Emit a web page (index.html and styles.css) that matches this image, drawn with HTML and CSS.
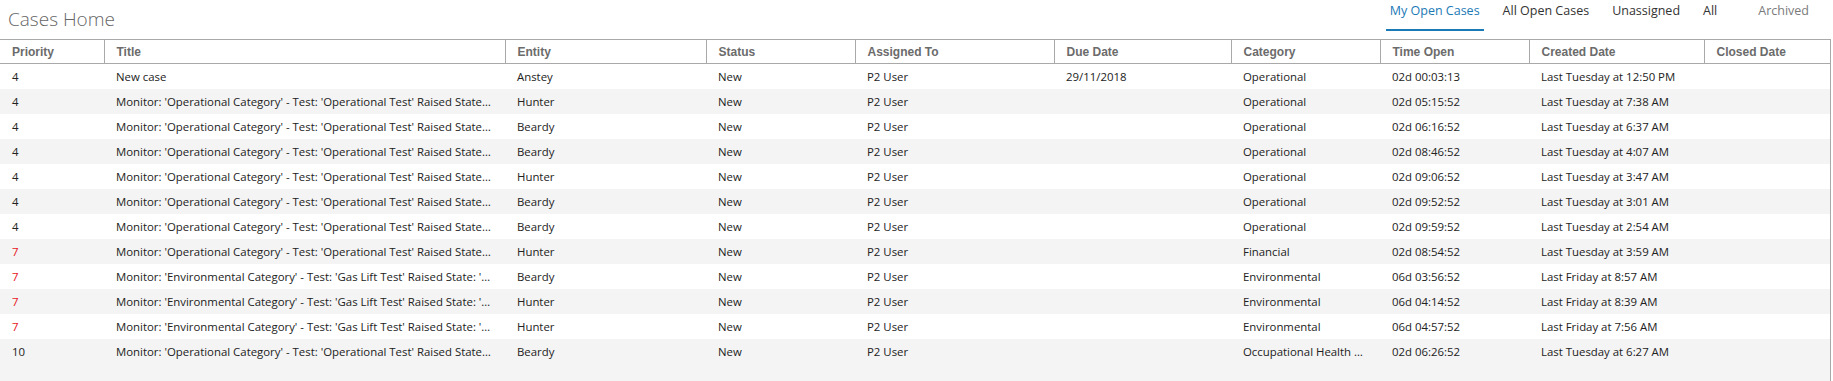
FILE: index.html
```html
<!DOCTYPE html>
<html lang="en">
<head>
<meta charset="utf-8">
<title>Cases Home</title>
<link rel="stylesheet" href="styles.css">
</head>
<body>
<div class="page">
  <header class="topbar">
    <h1 class="page-title">Cases Home</h1>
    <nav class="tabs">
      <a class="tab active">My Open Cases</a>
      <a class="tab">All Open Cases</a>
      <a class="tab">Unassigned</a>
      <a class="tab">All</a>
      <a class="tab archived">Archived</a>
    </nav>
  </header>
  <div class="grid">
    <table class="cases">
      <colgroup>
        <col class="c-priority"><col class="c-title"><col class="c-entity"><col class="c-status"><col class="c-assigned"><col class="c-due"><col class="c-category"><col class="c-time"><col class="c-created"><col class="c-closed">
      </colgroup>
      <thead>
        <tr><th>Priority</th><th>Title</th><th>Entity</th><th>Status</th><th>Assigned To</th><th>Due Date</th><th>Category</th><th>Time Open</th><th>Created Date</th><th>Closed Date</th></tr>
      </thead>
      <tbody>
        <tr><td>4</td><td>New case</td><td>Anstey</td><td>New</td><td>P2 User</td><td>29/11/2018</td><td>Operational</td><td>02d 00:03:13</td><td>Last Tuesday at 12:50 PM</td><td></td></tr>
        <tr><td>4</td><td>Monitor: 'Operational Category' - Test: 'Operational Test' Raised State: 'High'</td><td>Hunter</td><td>New</td><td>P2 User</td><td></td><td>Operational</td><td>02d 05:15:52</td><td>Last Tuesday at 7:38 AM</td><td></td></tr>
        <tr><td>4</td><td>Monitor: 'Operational Category' - Test: 'Operational Test' Raised State: 'High'</td><td>Beardy</td><td>New</td><td>P2 User</td><td></td><td>Operational</td><td>02d 06:16:52</td><td>Last Tuesday at 6:37 AM</td><td></td></tr>
        <tr><td>4</td><td>Monitor: 'Operational Category' - Test: 'Operational Test' Raised State: 'High'</td><td>Beardy</td><td>New</td><td>P2 User</td><td></td><td>Operational</td><td>02d 08:46:52</td><td>Last Tuesday at 4:07 AM</td><td></td></tr>
        <tr><td>4</td><td>Monitor: 'Operational Category' - Test: 'Operational Test' Raised State: 'High'</td><td>Hunter</td><td>New</td><td>P2 User</td><td></td><td>Operational</td><td>02d 09:06:52</td><td>Last Tuesday at 3:47 AM</td><td></td></tr>
        <tr><td>4</td><td>Monitor: 'Operational Category' - Test: 'Operational Test' Raised State: 'High'</td><td>Beardy</td><td>New</td><td>P2 User</td><td></td><td>Operational</td><td>02d 09:52:52</td><td>Last Tuesday at 3:01 AM</td><td></td></tr>
        <tr><td>4</td><td>Monitor: 'Operational Category' - Test: 'Operational Test' Raised State: 'High'</td><td>Beardy</td><td>New</td><td>P2 User</td><td></td><td>Operational</td><td>02d 09:59:52</td><td>Last Tuesday at 2:54 AM</td><td></td></tr>
        <tr><td class="high">7</td><td>Monitor: 'Operational Category' - Test: 'Operational Test' Raised State: 'High'</td><td>Hunter</td><td>New</td><td>P2 User</td><td></td><td>Financial</td><td>02d 08:54:52</td><td>Last Tuesday at 3:59 AM</td><td></td></tr>
        <tr><td class="high">7</td><td>Monitor: 'Environmental Category' - Test: 'Gas Lift Test' Raised State: 'High'</td><td>Beardy</td><td>New</td><td>P2 User</td><td></td><td>Environmental</td><td>06d 03:56:52</td><td>Last Friday at 8:57 AM</td><td></td></tr>
        <tr><td class="high">7</td><td>Monitor: 'Environmental Category' - Test: 'Gas Lift Test' Raised State: 'High'</td><td>Hunter</td><td>New</td><td>P2 User</td><td></td><td>Environmental</td><td>06d 04:14:52</td><td>Last Friday at 8:39 AM</td><td></td></tr>
        <tr><td class="high">7</td><td>Monitor: 'Environmental Category' - Test: 'Gas Lift Test' Raised State: 'High'</td><td>Hunter</td><td>New</td><td>P2 User</td><td></td><td>Environmental</td><td>06d 04:57:52</td><td>Last Friday at 7:56 AM</td><td></td></tr>
        <tr><td>10</td><td>Monitor: 'Operational Category' - Test: 'Operational Test' Raised State: 'High'</td><td>Beardy</td><td>New</td><td>P2 User</td><td></td><td>Occupational Health and Safety</td><td>02d 06:26:52</td><td>Last Tuesday at 6:27 AM</td><td></td></tr>
      </tbody>
    </table>
  </div>
</div>
</body>
</html>
```

FILE: styles.css
```css
html, body {
  margin: 0;
  padding: 0;
  background: #ffffff;
}

body {
  font-family: "Open Sans", "Liberation Sans", sans-serif;
  color: #222222;
}

.page {
  display: flex;
  flex-direction: column;
  height: 100vh;
}

.topbar {
  display: flex;
  justify-content: space-between;
  align-items: flex-start;
  height: 39px;
  flex: none;
}

.page-title {
  margin: 0;
  padding: 6px 0 0 8px;
  font-size: 19px;
  font-weight: 300;
  color: #666666;
  line-height: 26px;
}

.tabs {
  display: flex;
  align-items: flex-start;
  padding-right: 20px;
}

.tab {
  font-size: 12.5px;
  line-height: 20px;
  color: #333333;
  padding: 1px 4px 0;
  height: 28px;
  margin-left: 15px;
  border-bottom: 2px solid transparent;
}

.tab.active {
  color: #1a7ab6;
  border-bottom-color: #1a7ab6;
  margin-left: 0;
}

.tab.archived {
  color: #7a7a7a;
  margin-left: 33px;
}

.grid {
  flex: 1;
  background: #f4f4f4;
  border-top: 1px solid #a9a9a9;
  border-right: 1px solid #a9a9a9;
  margin-right: 2px;
}

.cases {
  width: 100%;
  table-layout: fixed;
  border-collapse: collapse;
  border-spacing: 0;
}

.c-priority { width: 104px; }
.c-title { width: 401px; }
.c-entity { width: 201px; }
.c-status { width: 149px; }
.c-assigned { width: 199px; }
.c-due { width: 177px; }
.c-category { width: 149px; }
.c-time { width: 149px; }
.c-created { width: 175px; }
.c-closed { width: auto; }

.cases th {
  height: 23px;
  padding: 0 0 0 12px;
  background: #ffffff;
  border-bottom: 1px solid #a9a9a9;
  border-left: 1px solid #a9a9a9;
  text-align: left;
  font-family: "Liberation Sans", Arial, sans-serif;
  font-weight: bold;
  font-size: 12px;
  color: #6b6b6b;
  white-space: nowrap;
}

.cases th:first-child {
  border-left: none;
}

.cases td {
  height: 25px;
  padding: 0 12px;
  font-size: 11.4px;
  color: #222222;
  white-space: nowrap;
  overflow: hidden;
  text-overflow: ellipsis;
}

.cases tbody tr:nth-child(odd) td {
  background: #ffffff;
}

.cases tbody tr:nth-child(even) td {
  background: #f4f4f4;
}

.cases td.high {
  color: #e8141b;
}
```
